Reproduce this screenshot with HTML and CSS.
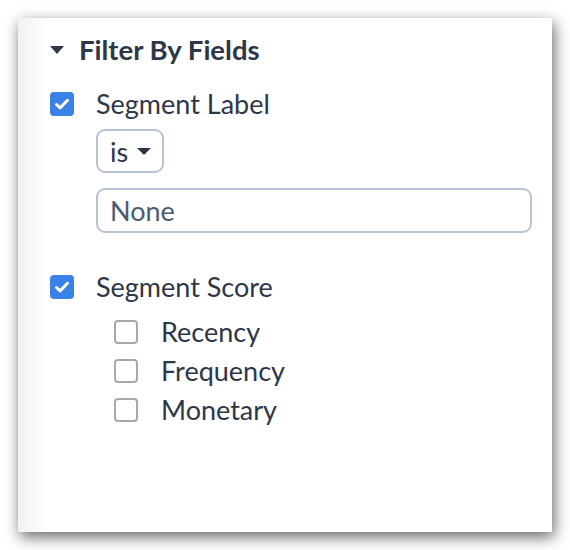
FILE: index.html
```html
<!DOCTYPE html>
<html>
<head>
<meta charset="utf-8">
<link rel="stylesheet" href="styles.css">
</head>
<body>
<div class="panel">
  <div class="heading">
    <span class="caret"></span>
    <span class="title">Filter By Fields</span>
  </div>
  <div class="field">
    <label class="row">
      <span class="box checked"><svg viewBox="0 0 24 24" width="24" height="24"><path d="M6.5 12.5l3.6 3.4 7.4-7.6" fill="none" stroke="#fff" stroke-width="3" stroke-linecap="round" stroke-linejoin="round"/></svg></span>
      <span class="label">Segment Label</span>
    </label>
    <div class="controls">
      <div class="select"><span>is</span><span class="caret small"></span></div>
      <div class="input">None</div>
    </div>
  </div>
  <div class="field">
    <label class="row">
      <span class="box checked"><svg viewBox="0 0 24 24" width="24" height="24"><path d="M6.5 12.5l3.6 3.4 7.4-7.6" fill="none" stroke="#fff" stroke-width="3" stroke-linecap="round" stroke-linejoin="round"/></svg></span>
      <span class="label">Segment Score</span>
    </label>
    <div class="subs">
      <label class="row sub"><span class="box"></span><span class="label">Recency</span></label>
      <label class="row sub"><span class="box"></span><span class="label">Frequency</span></label>
      <label class="row sub"><span class="box"></span><span class="label">Monetary</span></label>
    </div>
  </div>
</div>
</body>
</html>
```
FILE: styles.css
```css
html, body {
  margin: 0;
  padding: 0;
  background: #fff;
}
body {
  padding: 18px;
  font-family: Lato, "Open Sans", sans-serif;
  color: #2d3748;
}
.panel {
  box-sizing: border-box;
  width: 534px;
  height: 514px;
  background: linear-gradient(to right, #f1f1f1 0px, #fff 30px);
  box-shadow: 2px 5px 14px rgba(0,0,0,0.6);
  padding: 16px 20px 0 32px;
  display: flex;
  flex-direction: column;
}
.heading {
  display: flex;
  align-items: center;
  gap: 15px;
  height: 32px;
}
.caret {
  width: 0;
  height: 0;
  border-left: 7px solid transparent;
  border-right: 7px solid transparent;
  border-top: 8px solid #2d3748;
}
.caret.small {
  border-left-width: 7px;
  border-right-width: 7px;
  border-top-width: 7px;
}
.title {
  font-weight: 700;
  font-size: 27.5px;
  line-height: 32px;
}
.field {
  display: flex;
  flex-direction: column;
}
.field + .field { margin-top: 38px; }
.heading + .field { margin-top: 22px; }
.row {
  display: flex;
  align-items: center;
  gap: 22px;
  height: 32px;
}
.box {
  box-sizing: border-box;
  width: 24px;
  height: 24px;
  border-radius: 4px;
  border: 2px solid #a8a8a8;
  background: #fff;
  flex: none;
  display: flex;
}
.box.checked {
  border: none;
  background: #3b82e6;
}
.label {
  font-size: 27px;
  line-height: 32px;
}
.controls {
  margin: 9px 0 0 46px;
  display: flex;
  flex-direction: column;
  align-items: flex-start;
  gap: 15px;
}
.select {
  box-sizing: border-box;
  height: 44px;
  padding: 0 11px 0 12px;
  border: 2px solid #b8c4d4;
  border-radius: 9px;
  display: flex;
  align-items: center;
  gap: 9px;
  font-size: 27px;
}
.input {
  box-sizing: border-box;
  align-self: stretch;
  height: 45px;
  padding: 0 12px;
  border: 2px solid #b8c4d4;
  border-radius: 9px;
  display: flex;
  align-items: center;
  font-size: 27px;
  color: #4a5a70;
}
.subs {
  margin: 13px 0 0 64px;
  display: flex;
  flex-direction: column;
  gap: 7px;
}
.sub { gap: 23px; }
```
